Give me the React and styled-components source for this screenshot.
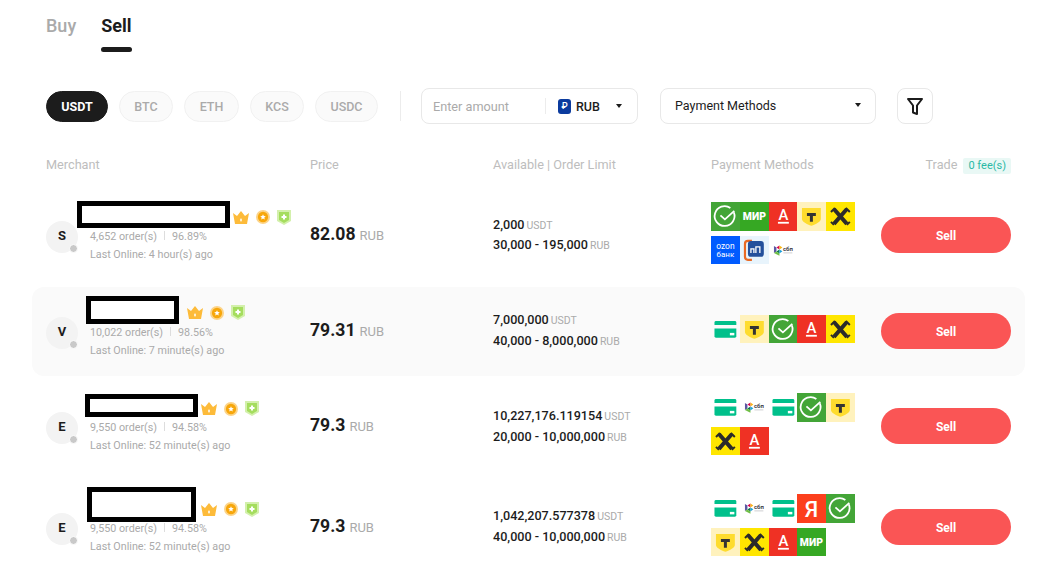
import styled, { createGlobalStyle } from 'styled-components';

const GlobalStyle = createGlobalStyle`
  html, body {
    margin: 0;
    background: #fff;
    font-family: Roboto, "Liberation Sans", sans-serif;
  }
  * {
    box-sizing: border-box;
  }
`;

const COLUMNS = '264px 183px 218px 170px 130px';

const Page = styled.div`
  width: 1063px;
  height: 586px;
  padding: 14px 38px 0 32px;
  overflow: hidden;
`;

const Tabs = styled.div`
  display: flex;
  gap: 25px;
  padding-left: 14px;
`;

const Tab = styled.div`
  font-size: 18px;
  line-height: 24px;
  font-weight: ${(p) => (p.$active ? 700 : 500)};
  color: ${(p) => (p.$active ? '#1c1c1c' : '#aaaaaa')};
  &::after {
    content: '';
    display: block;
    height: 5px;
    margin-top: 9px;
    border-radius: 3px;
    background: ${(p) => (p.$active ? '#1c1c1c' : 'transparent')};
  }
`;

const Filters = styled.div`
  display: flex;
  align-items: center;
  margin-top: 36px;
  padding-left: 14px;
`;

const Chips = styled.div`
  display: flex;
  gap: 11px;
`;

const Chip = styled.div`
  width: ${(p) => p.$width}px;
  height: 31px;
  display: flex;
  align-items: center;
  justify-content: center;
  border-radius: 16px;
  border: 1px solid ${(p) => (p.$active ? '#1c1c1c' : '#f1f1f1')};
  background: ${(p) => (p.$active ? '#1c1c1c' : '#fafafa')};
  color: ${(p) => (p.$active ? '#fff' : '#aaaaaa')};
  font-size: 12.5px;
  font-weight: ${(p) => (p.$active ? 700 : 500)};
`;

const Divider = styled.div`
  width: 1px;
  height: 30px;
  margin: 0 20px 0 22px;
  background: #ececec;
`;

const Field = styled.div`
  height: 36px;
  display: flex;
  align-items: center;
  border: 1px solid #e8e8e8;
  border-radius: 8px;
  background: #fff;
`;

const AmountField = styled(Field)`
  width: 217px;
  padding: 0 15px 0 11px;
`;

const AmountInput = styled.input`
  width: 112px;
  border: 0;
  padding: 0;
  outline: none;
  background: transparent;
  font: 400 12.7px Roboto, sans-serif;
  &::placeholder {
    color: #aaaaaa;
    opacity: 1;
  }
`;

const Currency = styled.div`
  flex: 1;
  display: flex;
  align-items: center;
  gap: 5px;
  padding-left: 12px;
  border-left: 1px solid #ececec;
  height: 16px;
  font-size: 12.5px;
  font-weight: 500;
  color: #1c1c1c;
`;

const RubMark = styled.span`
  width: 13px;
  height: 15px;
  display: flex;
  align-items: center;
  justify-content: center;
  border-radius: 3px;
  background: #0b3b9e;
  color: #fff;
  font-size: 9px;
`;

const Caret = styled.span`
  margin-left: auto;
  width: 0;
  height: 0;
  border-left: 3.5px solid transparent;
  border-right: 3.5px solid transparent;
  border-top: 4px solid #1c1c1c;
`;

const MethodField = styled(Field)`
  width: 216px;
  margin-left: 22px;
  padding: 0 14px 2px;
  font-size: 12.5px;
  color: #1c1c1c;
`;

const FilterButton = styled(Field)`
  width: 36px;
  margin-left: 21px;
  justify-content: center;
`;

const TableGrid = styled.div`
  display: grid;
  grid-template-columns: ${COLUMNS};
  padding: 0 14px;
`;

const Head = styled(TableGrid)`
  height: 16px;
  margin-top: 34px;
  margin-bottom: 16px;
  align-items: center;
  font-size: 12.7px;
  line-height: 14px;
  color: #bdbdbd;
  & > div:not(:last-child) {
    margin-top: -2px;
  }
`;

const TradeHead = styled.div`
  display: flex;
  justify-content: flex-end;
  align-items: center;
  gap: 6px;
`;

const TradeLabel = styled.span`
  margin-top: -2px;
`;

const FeeBadge = styled.span`
  height: 16px;
  padding: 0 5px;
  display: flex;
  align-items: center;
  border-radius: 2px;
  background: #e9f8f5;
  color: #2bb8a5;
  font-size: 11px;
`;

const Row = styled(TableGrid)`
  height: ${(p) => p.$height}px;
  margin-top: ${(p) => p.$gap}px;
  padding-bottom: ${(p) => (p.$shaded ? 1 : 0)}px;
  align-items: center;
  border-radius: 12px;
  background: ${(p) => (p.$shaded ? '#fafafa' : 'transparent')};
`;

const Merchant = styled.div`
  align-self: start;
  padding-top: ${(p) => p.$top}px;
  display: flex;
  align-items: flex-end;
  gap: 12px;
`;

const Avatar = styled.div`
  position: relative;
  flex: none;
  width: 32px;
  height: 32px;
  margin-bottom: 11px;
  padding-bottom: 3px;
  display: flex;
  align-items: center;
  justify-content: center;
  border-radius: 50%;
  background: #f3f3f3;
  color: #1c1c1c;
  font-size: 13px;
  font-weight: 700;
`;

const StatusDot = styled.span`
  position: absolute;
  right: 0;
  bottom: 0;
  width: 9px;
  height: 9px;
  border-radius: 50%;
  border: 1px solid #fff;
  background: #c9c9c9;
`;

const NameLine = styled.div`
  display: flex;
  align-items: center;
  margin-left: -${(p) => p.$shift}px;
  margin-bottom: ${(p) => p.$below}px;
`;

const Redacted = styled.div`
  width: ${(p) => p.$width}px;
  height: ${(p) => p.$height}px;
  border: 5px solid #000;
  background: #fff;
`;

const Badges = styled.div`
  display: flex;
  align-items: center;
  gap: 7px;
  margin-left: ${(p) => p.$left}px;
  margin-top: ${(p) => p.$drop}px;
`;

const Meta = styled.div`
  font-size: 10.75px;
  line-height: 18px;
  color: #aaaaaa;
  white-space: nowrap;
`;

const MetaSep = styled.span`
  display: inline-block;
  width: 1px;
  height: 9px;
  margin: 0 7px;
  background: #dddddd;
`;

const Price = styled.div`
  margin-top: ${(p) => p.$offset}px;
  font-size: 17.6px;
  font-weight: 700;
  color: #1c1c1c;
`;

const Unit = styled.span`
  margin-left: 4px;
  font-size: 13px;
  font-weight: 400;
  color: #aaaaaa;
`;

const Limits = styled.div`
  margin-top: ${(p) => p.$offset}px;
`;

const LimitLine = styled.div`
  font-size: 12.6px;
  line-height: 19.5px;
  font-weight: 500;
  color: #1c1c1c;
  white-space: nowrap;
`;

const SmallUnit = styled.span`
  margin-left: 2px;
  font-size: 10.5px;
  font-weight: 400;
  color: #aaaaaa;
`;

const Methods = styled.div`
  width: 144px;
  display: flex;
  flex-wrap: wrap;
  row-gap: 5px;
  margin-top: -4px;
`;

const Tile = styled.div`
  width: 28.8px;
  height: 28.8px;
  background: ${(p) => p.$bg || 'transparent'};
  svg {
    display: block;
    width: 100%;
    height: 100%;
  }
`;

const SellButton = styled.button`
  width: 130px;
  height: 36px;
  padding: 2px 0 0;
  border: 0;
  border-radius: 18px;
  background: #fa5555;
  color: #fff;
  font: 700 12px Roboto, sans-serif;
`;

const logoText = { fontFamily: 'Roboto, sans-serif', textAnchor: 'middle' };

const Sber = () => (
  <Tile $bg="#43a537">
    <svg viewBox="0 0 29 29">
      <path d="M23 10.500A10 10 0 1 1 19.500 6" fill="none" stroke="#fff" strokeWidth="1.800" />
      <path d="M9.500 13.500l4.500 4 9.500-8.500" fill="none" stroke="#fff" strokeWidth="1.800" />
    </svg>
  </Tile>
);

const Mir = () => (
  <Tile $bg="#36a823">
    <svg viewBox="0 0 29 29">
      <text x="14.5" y="18" fill="#fff" fontSize="10.5" fontWeight="900" style={logoText}>МИР</text>
    </svg>
  </Tile>
);

const Alfa = () => (
  <Tile $bg="#ef3124">
    <svg viewBox="0 0 29 29">
      <text x="14.5" y="18.5" fill="#fff" fontSize="15" fontWeight="500" style={logoText}>А</text>
      <rect x="9" y="20" width="11" height="1.8" fill="#fff" />
    </svg>
  </Tile>
);

const Tbank = () => (
  <Tile $bg="#fff2bd">
    <svg viewBox="0 0 29 29">
      <path d="M5 6h19v11c0 3-5 5-9.500 7C10 22 5 20 5 17z" fill="#fedc2e" />
      <path d="M10 11h9v3h-3v6h-3v-6h-3z" fill="#333" />
    </svg>
  </Tile>
);

const Raif = () => (
  <Tile $bg="#ffe600">
    <svg viewBox="0 0 29 29">
      <path d="M8 7l13 15M21 7L8 22" stroke="#2b2b2b" strokeWidth="4" />
      <path d="M5 10l4-4M24 10l-4-4M5 20l3 3M24 20l-3 3" stroke="#2b2b2b" strokeWidth="2" />
    </svg>
  </Tile>
);

const Ozon = () => (
  <Tile $bg="#005bff">
    <svg viewBox="0 0 29 29">
      <text x="14.5" y="13.500" fill="#fff" fontSize="8.500" style={logoText}>ozon</text>
      <text x="14.5" y="21" fill="#fff" fontSize="8" style={logoText}>банк</text>
    </svg>
  </Tile>
);

const Psb = () => (
  <Tile $bg="#e8f4fc">
    <svg viewBox="0 0 29 29">
      <path d="M12 5H8a3 3 0 0 0-3 3v13a3 3 0 0 0 3 3h4" fill="none" stroke="#ea6a24" strokeWidth="2.200" />
      <rect x="8" y="5" width="16" height="16" rx="3" fill="#24509b" />
      <path d="M11 17v-4h3v4M16 17v-6h4v6" fill="none" stroke="#fff" strokeWidth="1.300" />
    </svg>
  </Tile>
);

const Sbp = () => (
  <Tile>
    <svg viewBox="0 0 29 29">
      <path d="M5 10l2.500 1.500v4L5 17z" fill="#5b57a2" />
      <path d="M7.500 11.500l3-2v4z" fill="#d90751" />
      <path d="M7.500 15.500l3-2v4z" fill="#0f754e" />
      <path d="M5 17l5.500 3v-2.500l-3-2z" fill="#6fbe45" />
      <path d="M10.500 13.500l3-1.800-3-2.200z" fill="#fab718" />
      <path d="M10.500 13.500l3 1.800-3 2.200z" fill="#1b9fd9" />
      <text x="19" y="15" fill="#3b3b46" fontSize="6" fontWeight="700" style={logoText}>сбп</text>
      <rect x="14.500" y="16.500" width="9" height="1" fill="#3b3b46" opacity=".25" />
    </svg>
  </Tile>
);

const Card = () => (
  <Tile>
    <svg viewBox="0 0 29 29">
      <path d="M5 6h19a1.500 1.500 0 0 1 1.500 1.500V10H3.500V7.500A1.500 1.500 0 0 1 5 6z" fill="#00c08b" />
      <path d="M3.500 13.500h22v8A1.500 1.500 0 0 1 24 23H5a1.500 1.500 0 0 1-1.500-1.500z" fill="#00c08b" />
      <rect x="19" y="18" width="4.500" height="2.500" fill="#fff" />
    </svg>
  </Tile>
);

const Yandex = () => (
  <Tile $bg="#fc3f1d">
    <svg viewBox="0 0 29 29">
      <text x="14.5" y="23" fill="#fff" fontSize="22" fontWeight="500" style={logoText}>Я</text>
    </svg>
  </Tile>
);

const Crown = () => (
  <svg width="16" height="13" viewBox="0 0 16 13">
    <path d="M0 2l4 3 4-5 4 5 4-3-2 11H2z" fill="#fdbb3a" />
    <path d="M8 7l1 2-1 2-1-2z" fill="#fff" />
  </svg>
);

const Coin = () => (
  <svg width="14" height="14" viewBox="0 0 15 15">
    <circle cx="7.5" cy="7.5" r="7.500" fill="#fcd489" />
    <circle cx="7.5" cy="7.5" r="5.500" fill="#f7a70b" />
    <path d="M7.500 4.500l.9 2 2.100.2-1.600 1.400.5 2.100-1.900-1.100-1.900 1.100.5-2.100-1.600-1.400 2.100-.2z" fill="#fff" />
  </svg>
);

const Shield = () => (
  <svg width="14" height="15" viewBox="0 0 14 15">
    <path d="M0 0h14v11l-7 4-7-4z" fill="#d3f0ac" />
    <path d="M2 2h10v8l-5 3-5-3z" fill="#a5dd5e" />
    <path d="M6 4.500h2V6h1.500v2H8v1.500H6V8H4.500V6H6z" fill="#fff" />
  </svg>
);

const FunnelIcon = () => (
  <svg width="20" height="20" viewBox="0 0 20 20">
    <path d="M3 3h14l-5 6.500V18l-4-1.500V9.500z" fill="none" stroke="#1c1c1c" strokeWidth="2" strokeLinejoin="round" />
  </svg>
);

const rows = [
  {
    letter: 'S', orders: '4,652', rate: '96.89%', online: '4 hour(s)', price: '82.08',
    available: '2,000', limit: '30,000 - 195,000',
    height: 90, gap: 0, top: 11, shift: 13, boxW: 153, boxH: 27, badgeLeft: 3, drop: 5, below: 0,
    priceTop: -2, limitTop: 0,
    methods: [Sber, Mir, Alfa, Tbank, Raif, Ozon, Psb, Sbp],
  },
  {
    letter: 'V', orders: '10,022', rate: '98.56%', online: '7 minute(s)', price: '79.31',
    available: '7,000,000', limit: '40,000 - 8,000,000', shaded: true,
    height: 89, gap: 7, top: 9, shift: 4, boxW: 93, boxH: 28, badgeLeft: 8, drop: 5, below: 0,
    priceTop: -3, limitTop: -1,
    methods: [Card, Tbank, Sber, Alfa, Raif],
  },
  {
    letter: 'E', orders: '9,550', rate: '94.58%', online: '52 minute(s)', price: '79.3',
    available: '10,227,176.119154', limit: '20,000 - 10,000,000',
    height: 100, gap: 0, top: 18, shift: 5, boxW: 113, boxH: 23, badgeLeft: 3, drop: 6, below: 2,
    priceTop: -2, limitTop: 1,
    methods: [Card, Sbp, Card, Sber, Tbank, Raif, Alfa],
  },
  {
    letter: 'E', orders: '9,550', rate: '94.58%', online: '52 minute(s)', price: '79.3',
    available: '1,042,207.577378', limit: '40,000 - 10,000,000',
    height: 98, gap: 2, top: 9, shift: 3, boxW: 109, boxH: 35, badgeLeft: 5, drop: 9, below: -2,
    priceTop: -2, limitTop: -1,
    methods: [Card, Sbp, Card, Yandex, Sber, Tbank, Raif, Alfa, Mir],
  },
];

export default function App() {
  return (
    <Page>
      <GlobalStyle />
      <Tabs>
        <Tab>Buy</Tab>
        <Tab $active>Sell</Tab>
      </Tabs>

      <Filters>
        <Chips>
          <Chip $active $width={62}>USDT</Chip>
          <Chip $width={54}>BTC</Chip>
          <Chip $width={55}>ETH</Chip>
          <Chip $width={54}>KCS</Chip>
          <Chip $width={63}>USDC</Chip>
        </Chips>
        <Divider />
        <AmountField>
          <AmountInput placeholder="Enter amount" />
          <Currency>
            <RubMark>₽</RubMark>
            RUB
            <Caret />
          </Currency>
        </AmountField>
        <MethodField>
          Payment Methods
          <Caret />
        </MethodField>
        <FilterButton>
          <FunnelIcon />
        </FilterButton>
      </Filters>

      <Head>
        <div>Merchant</div>
        <div>Price</div>
        <div>Available | Order Limit</div>
        <div>Payment Methods</div>
        <TradeHead>
          <TradeLabel>Trade</TradeLabel>
          <FeeBadge>0 fee(s)</FeeBadge>
        </TradeHead>
      </Head>

      {rows.map((row, i) => (
        <Row key={i} $height={row.height} $gap={row.gap} $shaded={row.shaded}>
          <Merchant $top={row.top}>
            <Avatar>
              {row.letter}
              <StatusDot />
            </Avatar>
            <div>
              <NameLine $shift={row.shift} $below={row.below}>
                <Redacted $width={row.boxW} $height={row.boxH} />
                <Badges $left={row.badgeLeft} $drop={row.drop}>
                  <Crown />
                  <Coin />
                  <Shield />
                </Badges>
              </NameLine>
              <Meta>
                {row.orders} order(s)
                <MetaSep />
                {row.rate}
              </Meta>
              <Meta>Last Online: {row.online} ago</Meta>
            </div>
          </Merchant>
          <Price $offset={row.priceTop}>
            {row.price}
            <Unit>RUB</Unit>
          </Price>
          <Limits $offset={row.limitTop}>
            <LimitLine>
              {row.available}
              <SmallUnit>USDT</SmallUnit>
            </LimitLine>
            <LimitLine>
              {row.limit}
              <SmallUnit>RUB</SmallUnit>
            </LimitLine>
          </Limits>
          <Methods>
            {row.methods.map((Method, j) => (
              <Method key={j} />
            ))}
          </Methods>
          <SellButton>Sell</SellButton>
        </Row>
      ))}
    </Page>
  );
}
